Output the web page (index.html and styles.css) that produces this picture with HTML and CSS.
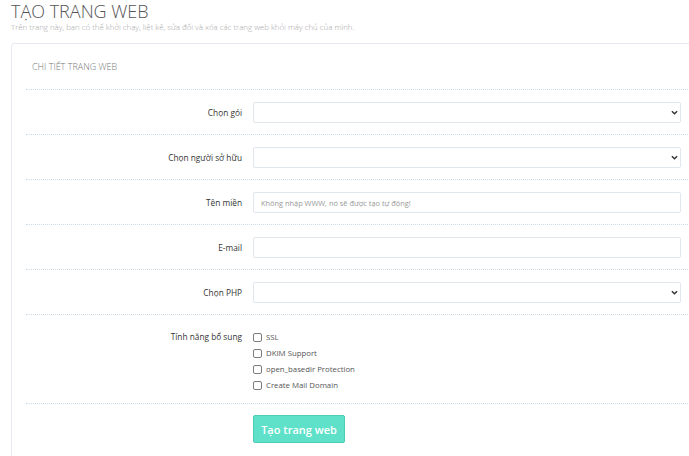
FILE: index.html
```html
<!DOCTYPE html>
<html lang="vi">
<head>
    <meta charset="UTF-8">
    <meta name="viewport" content="width=device-width, initial-scale=1.0">
    <title>Tạo trang web</title>
    <link rel="stylesheet" href="styles.css">
</head>
<body>
    <div class="page-head">
        <h1>TẠO TRANG WEB</h1>
        <p class="lead">Trên trang này, bạn có thể khởi chạy, liệt kê, sửa đổi và xóa các trang web khỏi máy chủ của mình.</p>
    </div>

    <div class="card">
        <div class="card-title">CHI TIẾT TRANG WEB</div>

        <form class="site-form">
            <div class="row">
                <label>Chọn gói</label>
                <div class="select-wrap">
                    <select></select>
                    <svg class="chevron" viewBox="0 0 8 5" width="7" height="5"><path d="M1 1l3 3 3-3" fill="none" stroke="#333" stroke-width="1.6"/></svg>
                </div>
            </div>
            <div class="row">
                <label>Chọn người sở hữu</label>
                <div class="select-wrap">
                    <select></select>
                    <svg class="chevron" viewBox="0 0 8 5" width="7" height="5"><path d="M1 1l3 3 3-3" fill="none" stroke="#333" stroke-width="1.6"/></svg>
                </div>
            </div>
            <div class="row">
                <label>Tên miền</label>
                <input type="text" placeholder="Không nhập WWW, nó sẽ được tạo tự động!">
            </div>
            <div class="row">
                <label>E-mail</label>
                <input type="text">
            </div>
            <div class="row">
                <label>Chọn PHP</label>
                <div class="select-wrap">
                    <select></select>
                    <svg class="chevron" viewBox="0 0 8 5" width="7" height="5"><path d="M1 1l3 3 3-3" fill="none" stroke="#333" stroke-width="1.6"/></svg>
                </div>
            </div>
            <div class="row row-checks">
                <label>Tính năng bổ sung</label>
                <div class="checks">
                    <label class="check"><input type="checkbox"> SSL</label>
                    <label class="check"><input type="checkbox"> DKIM Support</label>
                    <label class="check"><input type="checkbox"> open_basedir Protection</label>
                    <label class="check"><input type="checkbox"> Create Mail Domain</label>
                </div>
            </div>
            <div class="row row-submit">
                <span></span>
                <div><button type="button" class="btn">Tạo trang web</button></div>
            </div>
        </form>
    </div>
</body>
</html>
```

FILE: styles.css
```css
body {
    margin: 0;
    background-color: #fff;
    font-family: "Open Sans", Arial, sans-serif;
    color: #333;
    overflow: hidden;
}
.page-head {
    padding: 1px 11px 0;
}
h1 {
    margin: 0;
    font-size: 18px;
    font-weight: 300;
    color: #555;
    line-height: 20px;
}
.lead {
    margin: 0;
    font-size: 7.9px;
    font-weight: 300;
    color: #a8a8a8;
    line-height: 12px;
}
.card {
    margin: 10px 0 0 11px;
    width: 720px;
    border: 1px solid #e6e9ef;
    border-radius: 3px;
    padding: 0 14px;
}
.card-title {
    padding: 17px 6px 16px;
    font-size: 9px;
    font-weight: 300;
    color: #777;
    line-height: 12px;
    border-bottom: 1px dotted #cfdbe6;
}
.row {
    display: grid;
    grid-template-columns: 216px 428px;
    column-gap: 11px;
    align-items: center;
    padding: 12px 0 11px;
    border-bottom: 1px dotted #cfdbe6;
}
.row > label {
    text-align: right;
    font-size: 8.3px;
    font-weight: 500;
    color: #333;
    line-height: 12px;
}
input[type="text"], select {
    display: block;
    box-sizing: border-box;
    width: 100%;
    height: 21px;
    margin: 0;
    border: 1px solid #e1e7ef;
    border-radius: 2px;
    background: #fff;
    font-family: inherit;
    font-size: 7.4px;
    padding: 0 7px;
    color: #333;
    outline: none;
}
input::placeholder {
    color: #999;
}
select {
    -webkit-appearance: none;
    appearance: none;
}
.select-wrap {
    position: relative;
}
.chevron {
    position: absolute;
    right: 3px;
    top: 8px;
}
.row-checks {
    align-items: start;
    padding: 14px 0 10px;
}
.row-checks > label {
    line-height: 16px;
}
.checks {
    display: flex;
    flex-direction: column;
}
.check {
    display: flex;
    align-items: center;
    height: 16px;
    font-size: 7.8px;
    color: #555;
}
.check input {
    -webkit-appearance: none;
    appearance: none;
    width: 9px;
    height: 9px;
    margin: 0 4px 0 0;
    border: 1px solid #7d7d7d;
    border-radius: 2px;
    background: #fff;
}
.row-submit {
    border-bottom: none;
    padding: 11px 0 20px;
}
.btn {
    width: 92px;
    height: 28px;
    padding: 0;
    border: 1px solid #4ccdb6;
    border-radius: 2px;
    background-color: #5ee0c9;
    color: #fff;
    font-family: inherit;
    font-size: 11px;
    font-weight: 600;
    white-space: nowrap;
    cursor: pointer;
}
```
